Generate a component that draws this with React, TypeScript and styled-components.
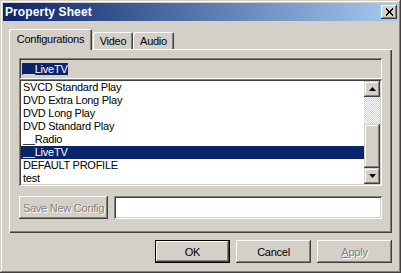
import React from "react";
import styled, { createGlobalStyle } from "styled-components";

const GlobalStyle = createGlobalStyle`
  body {
    margin: 0;
    background: #d4d0c8;
  }
  * {
    box-sizing: border-box;
  }
`;

const face = "#d4d0c8";
const shadow = "#808080";
const dark = "#404040";
const navy = "#0a246a";

const Window = styled.div`
  width: 401px;
  height: 273px;
  padding: 3px;
  background: ${face};
  box-shadow: inset -1px -1px ${dark}, inset 1px 1px ${face},
    inset -2px -2px ${shadow}, inset 2px 2px #fff;
  font-family: "Liberation Sans", Arial, sans-serif;
  font-size: 11px;
  letter-spacing: -0.25px;
  color: #000;
  display: flex;
  flex-direction: column;
`;

const TitleBar = styled.div`
  height: 18px;
  display: flex;
  align-items: center;
  justify-content: space-between;
  padding: 0 1px 0 2px;
  background: linear-gradient(to right, ${navy}, #a6caf0);
`;

const Title = styled.span`
  color: #fff;
  font-weight: bold;
  font-size: 12px;
  letter-spacing: 0.1px;
`;

const CloseButton = styled.button`
  width: 16px;
  height: 14px;
  padding: 0;
  border: none;
  background: ${face};
  display: flex;
  align-items: center;
  justify-content: center;
  box-shadow: inset -1px -1px ${dark}, inset 1px 1px #fff,
    inset -2px -2px ${shadow}, inset 2px 2px ${face};
`;

const Body = styled.div`
  flex: 1;
  padding: 8px 6px 0 6px;
  display: flex;
  flex-direction: column;
`;

const TabRow = styled.div`
  height: 20px;
  display: flex;
  align-items: flex-end;
`;

const Tab = styled.div<{ $active?: boolean; $w: number }>`
  width: ${(p) => p.$w}px;
  height: ${(p) => (p.$active ? 21 : 17)}px;
  margin-bottom: ${(p) => (p.$active ? -1 : 0)}px;
  margin-right: ${(p) => (p.$active ? 1 : 0)}px;
  z-index: ${(p) => (p.$active ? 1 : 0)};
  background: ${face};
  border-radius: 2px 2px 0 0;
  box-shadow: inset 1px 1px #fff, inset -1px 0 ${dark}, inset -2px 0 ${shadow};
  display: flex;
  align-items: center;
  justify-content: center;
  padding-bottom: ${(p) => (p.$active ? 2 : 0)}px;
`;

const Panel = styled.div`
  height: 184px;
  padding: 9px 10px 0 10px;
  box-shadow: inset 1px 1px #fff, inset -1px -1px ${dark},
    inset -2px -2px ${shadow};
  display: flex;
  flex-direction: column;
`;

const sunken = `
  box-shadow: inset 1px 1px ${shadow}, inset -1px -1px #fff,
    inset 2px 2px ${dark}, inset -2px -2px ${face};
`;

const NameField = styled.div`
  height: 21px;
  padding: 0 3px;
  background: ${face};
  display: flex;
  align-items: center;
  ${sunken}
`;

const Selected = styled.span`
  background: ${navy};
  color: #fff;
  padding: 0 1px;
  line-height: 12px;
`;

const ListBox = styled.div`
  height: 107px;
  padding: 2px;
  background: #fff;
  display: flex;
  ${sunken}
`;

const Items = styled.div`
  flex: 1;
  overflow: hidden;
`;

const Item = styled.div<{ $selected?: boolean }>`
  height: 13px;
  line-height: 13px;
  padding-left: 2px;
  white-space: nowrap;
  background: ${(p) => (p.$selected ? navy : "transparent")};
  color: ${(p) => (p.$selected ? "#fff" : "#000")};
`;

const ScrollBar = styled.div`
  width: 16px;
  display: flex;
  flex-direction: column;
`;

const ScrollButton = styled.div`
  width: 16px;
  height: 16px;
  background: ${face};
  display: flex;
  align-items: center;
  justify-content: center;
  box-shadow: inset -1px -1px ${dark}, inset 1px 1px ${face},
    inset -2px -2px ${shadow}, inset 2px 2px #fff;
`;

const Track = styled.div`
  flex: 1;
  background-image: conic-gradient(#fff 25%, ${face} 0 50%, #fff 0 75%, ${face} 0);
  background-size: 2px 2px;
  display: flex;
  flex-direction: column;
  justify-content: flex-end;
`;

const Thumb = styled.div`
  height: 44px;
  background: ${face};
  box-shadow: inset -1px -1px ${dark}, inset 1px 1px ${face},
    inset -2px -2px ${shadow}, inset 2px 2px #fff;
`;

const SaveRow = styled.div`
  margin-top: 10px;
  height: 23px;
  display: flex;
  gap: 6px;
`;

const Button = styled.button<{ $w: number; $default?: boolean }>`
  width: ${(p) => p.$w}px;
  height: 23px;
  padding: 0;
  font: inherit;
  letter-spacing: inherit;
  color: #000;
  background: ${face};
  border: ${(p) => (p.$default ? "1px solid #000" : "none")};
  box-shadow: inset -1px -1px ${dark}, inset 1px 1px #fff,
    inset -2px -2px ${shadow}, inset 2px 2px ${face};

  &:disabled {
    color: ${shadow};
    text-shadow: 1px 1px #fff;
  }
`;

const TextInput = styled.input`
  flex: 1;
  height: 23px;
  border: none;
  outline: none;
  background: #fff;
  font: inherit;
  ${sunken}
`;

const Footer = styled.div`
  margin-top: 7px;
  display: flex;
  justify-content: flex-end;
  gap: 6px;
`;

const Arrow = ({ up }: { up?: boolean }) => (
  <svg width="7" height="4" viewBox="0 0 7 4">
    <path d={up ? "M3.5 0 L7 4 L0 4 Z" : "M0 0 L7 0 L3.5 4 Z"} fill="#000" />
  </svg>
);

const CloseGlyph = () => (
  <svg width="9" height="8" viewBox="0 0 9 8">
    <path
      d="M1 0.5 L8 7.5 M8 0.5 L1 7.5"
      stroke="#000"
      strokeWidth="2"
      shapeRendering="crispEdges"
    />
  </svg>
);

const profiles = [
  "SVCD Standard Play",
  "DVD Extra Long Play",
  "DVD Long Play",
  "DVD Standard Play",
  "__Radio",
  "__LiveTV",
  "DEFAULT PROFILE",
  "test",
];

export default function App() {
  const current = "__LiveTV";
  return (
    <>
      <GlobalStyle />
      <Window>
        <TitleBar>
          <Title>Property Sheet</Title>
          <CloseButton>
            <CloseGlyph />
          </CloseButton>
        </TitleBar>
        <Body>
          <TabRow>
            <Tab $active $w={83}>Configurations</Tab>
            <Tab $w={40}>Video</Tab>
            <Tab $w={41}>Audio</Tab>
          </TabRow>
          <Panel>
            <NameField>
              <Selected>{current}</Selected>
            </NameField>
            <ListBox>
              <Items>
                {profiles.map((name) => (
                  <Item key={name} $selected={name === current}>
                    {name}
                  </Item>
                ))}
              </Items>
              <ScrollBar>
                <ScrollButton>
                  <Arrow up />
                </ScrollButton>
                <Track>
                  <Thumb />
                </Track>
                <ScrollButton>
                  <Arrow />
                </ScrollButton>
              </ScrollBar>
            </ListBox>
            <SaveRow>
              <Button $w={89} disabled>
                Save New Config
              </Button>
              <TextInput />
            </SaveRow>
          </Panel>
          <Footer>
            <Button $w={75} $default>
              OK
            </Button>
            <Button $w={75}>Cancel</Button>
            <Button $w={75} disabled>
              <u>A</u>pply
            </Button>
          </Footer>
        </Body>
      </Window>
    </>
  );
}
